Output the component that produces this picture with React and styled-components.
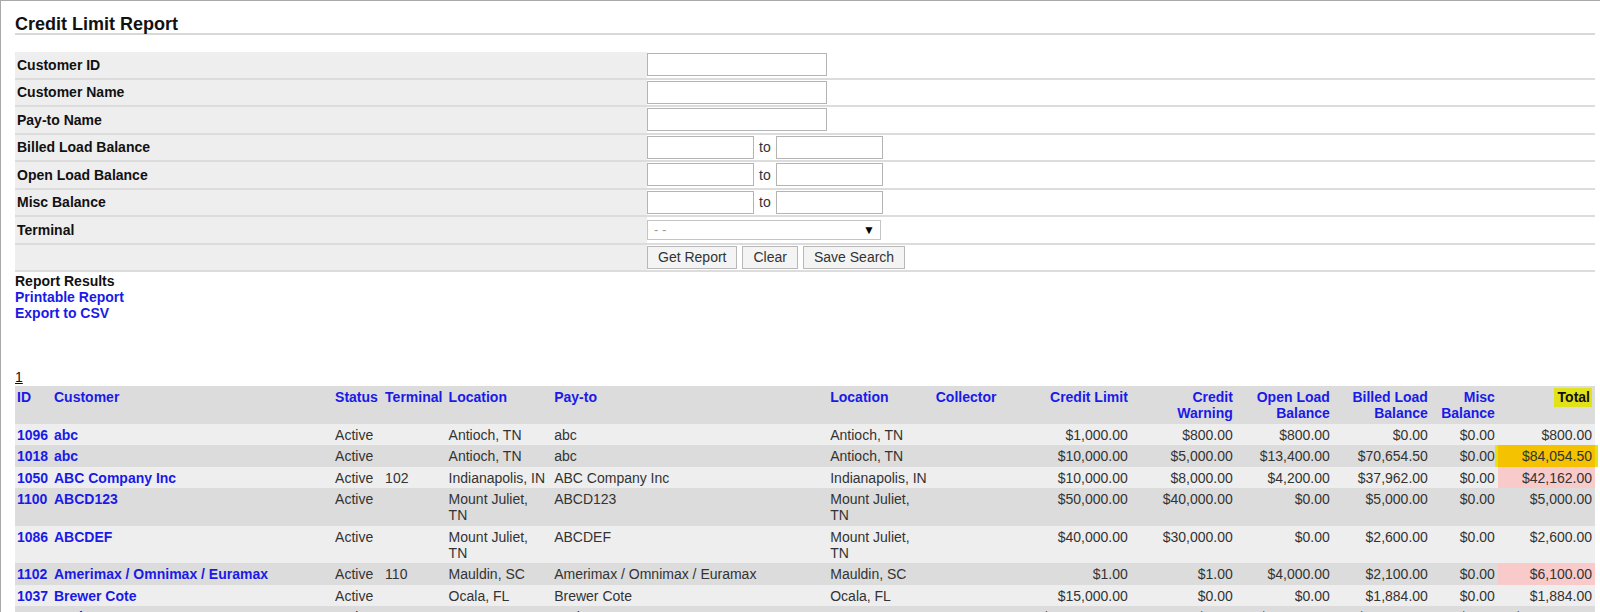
import React from 'react';
import styled, { createGlobalStyle } from 'styled-components';

const GlobalStyle = createGlobalStyle`
  html, body {
    margin: 0;
    padding: 0;
    background: #fff;
    overflow: hidden;
    font-family: "Liberation Sans", Arial, sans-serif;
    font-size: 14px;
    color: #333;
  }
`;

const Page = styled.div`
  border-top: 1px solid #a8a8a8;
  border-left: 1px solid #a8a8a8;
  padding: 15px 5px 0 14px;
  min-height: 700px;
`;

const Title = styled.h1`
  margin: 0;
  font-size: 18px;
  line-height: 17px;
  font-weight: bold;
  color: #111;
  border-bottom: 2px solid #d8d8d8;
`;

const SearchTable = styled.table`
  width: 100%;
  margin-top: 17px;
  border-collapse: collapse;
  table-layout: fixed;
  td {
    padding: 1px 0 1.5px;
    border-bottom: 2px solid #dcdcdc;
    vertical-align: middle;
  }
`;

const LabelCell = styled.td`
  width: 630px;
  padding-left: 2px !important;
  background: #eeeeee;
  font-weight: bold;
  color: #111;
  line-height: 16px;
`;

const FieldCell = styled.td`
  background: #fff;
`;

const Field = styled.div`
  display: flex;
  align-items: center;
  height: 23px;
  gap: 5px;
`;

const TextInput = styled.input`
  box-sizing: border-box;
  width: ${p => p.$w}px;
  height: 23px;
  margin: 0;
  border: 1px solid #b4b4b4;
  background: #fff;
`;

const ToText = styled.span`
  color: #333;
  font-size: 14px;
`;

const SelectBox = styled.div`
  position: relative;
  width: 234px;
  height: 20px;
`;

const Select = styled.select`
  box-sizing: border-box;
  appearance: none;
  width: 100%;
  height: 100%;
  margin: 0;
  padding: 0 6px;
  border: 1px solid #c4c4c4;
  background: #fff;
  color: #999;
  font-family: "Liberation Sans", Arial, sans-serif;
  font-size: 13px;
`;

const Arrow = styled.span`
  position: absolute;
  right: 6px;
  top: 2px;
  font-size: 12px;
  line-height: 16px;
  color: #000;
  pointer-events: none;
`;

const Button = styled.button`
  height: 23px;
  margin: 0;
  padding: 0 10px;
  border: 1px solid #b8b8b8;
  background: #f4f4f4;
  color: #333;
  font-family: "Liberation Sans", Arial, sans-serif;
  font-size: 14px;
`;

const Results = styled.div`
  margin-top: 1px;
  line-height: 16px;
  font-weight: bold;
`;

const ResultsTitle = styled.div`
  color: #111;
`;

const Link = styled.a`
  display: block;
  color: #1a1ae8;
  text-decoration: none;
`;

const Pager = styled.div`
  margin-top: 48px;
  line-height: 16px;
  color: #111;
  > span {
    text-decoration: underline;
  }
`;

const ReportTable = styled.table`
  width: 100%;
  margin-top: 1px;
  border-collapse: collapse;
  table-layout: fixed;
  line-height: 16px;
`;

const Col = styled.col`
  width: ${p => p.$w}px;
`;

const HeadCell = styled.th`
  padding: 3px 3px 2.5px 2px;
  background: #dcdcdc;
  color: #1a1ae8;
  font-weight: bold;
  text-align: ${p => p.$align || 'left'};
  vertical-align: top;
`;

const Marked = styled.span`
  background: #e2e21a;
  padding: 1px 2px 2px 4px;
  color: #111;
`;

const Row = styled.tr`
  background: ${p => (p.$even ? '#dcdcdc' : '#eeeeee')};
`;

const Cell = styled.td`
  padding: 3px 3px 2.5px 2px;
  vertical-align: top;
  text-align: ${p => p.$align || 'left'};
  color: ${p => (p.$link ? '#1a1ae8' : '#333')};
  font-weight: ${p => (p.$link ? 'bold' : 'normal')};
  background: ${p =>
    p.$mark === 'pink' ? '#f9caca' : p.$mark === 'orange' ? '#f4c200' : 'transparent'};
  box-shadow: ${p =>
    p.$mark === 'orange' ? '-3px 0 0 #e2e21a, 3px 0 0 #e2e21a' : 'none'};
`;

const columns = [
  { label: 'ID', w: 37 },
  { label: 'Customer', w: 281 },
  { label: 'Status', w: 50 },
  { label: 'Terminal', w: 63.5 },
  { label: 'Location', w: 105.5 },
  { label: 'Pay-to', w: 276 },
  { label: 'Location', w: 105.5 },
  { label: 'Collector', w: 100 },
  { label: ['Credit Limit'], w: 97, right: true },
  { label: ['Credit', 'Warning'], w: 105, right: true },
  { label: ['Open Load', 'Balance'], w: 97, right: true },
  { label: ['Billed Load', 'Balance'], w: 98, right: true },
  { label: ['Misc', 'Balance'], w: 67, right: true },
  { label: 'Total', w: 97, right: true, marked: true },
];

const rows = [
  ['1096', 'abc', 'Active', '', 'Antioch, TN', 'abc', 'Antioch, TN', '', '$1,000.00', '$800.00', '$800.00', '$0.00', '$0.00', '$800.00'],
  ['1018', 'abc', 'Active', '', 'Antioch, TN', 'abc', 'Antioch, TN', '', '$10,000.00', '$5,000.00', '$13,400.00', '$70,654.50', '$0.00', '$84,054.50', 'orange'],
  ['1050', 'ABC Company Inc', 'Active', '102', 'Indianapolis, IN', 'ABC Company Inc', 'Indianapolis, IN', '', '$10,000.00', '$8,000.00', '$4,200.00', '$37,962.00', '$0.00', '$42,162.00', 'pink'],
  ['1100', 'ABCD123', 'Active', '', 'Mount Juliet, TN', 'ABCD123', 'Mount Juliet, TN', '', '$50,000.00', '$40,000.00', '$0.00', '$5,000.00', '$0.00', '$5,000.00'],
  ['1086', 'ABCDEF', 'Active', '', 'Mount Juliet, TN', 'ABCDEF', 'Mount Juliet, TN', '', '$40,000.00', '$30,000.00', '$0.00', '$2,600.00', '$0.00', '$2,600.00'],
  ['1102', 'Amerimax / Omnimax / Euramax', 'Active', '110', 'Mauldin, SC', 'Amerimax / Omnimax / Euramax', 'Mauldin, SC', '', '$1.00', '$1.00', '$4,000.00', '$2,100.00', '$0.00', '$6,100.00', 'pink'],
  ['1037', 'Brewer Cote', 'Active', '', 'Ocala, FL', 'Brewer Cote', 'Ocala, FL', '', '$15,000.00', '$0.00', '$0.00', '$1,884.00', '$0.00', '$1,884.00'],
  ['1034', 'Lochner', 'Active', 'WASH', 'Fort Wayne, IN', 'Lochner', 'Fort Wayne, IN', '', '$1,111,111.00', '$0.00', '$67,577.41', '$32,850.00', '$0.00', '$100,427.41'],
];

const searchFields = [
  { label: 'Customer ID', kind: 'text' },
  { label: 'Customer Name', kind: 'text' },
  { label: 'Pay-to Name', kind: 'text' },
  { label: 'Billed Load Balance', kind: 'range' },
  { label: 'Open Load Balance', kind: 'range' },
  { label: 'Misc Balance', kind: 'range' },
  { label: 'Terminal', kind: 'select' },
];

const renderField = kind => {
  if (kind === 'range') {
    return (
      <Field>
        <TextInput $w={107} />
        <ToText>to</ToText>
        <TextInput $w={107} />
      </Field>
    );
  }
  if (kind === 'select') {
    return (
      <Field>
        <SelectBox>
          <Select defaultValue="">
            <option value="">- -</option>
          </Select>
          <Arrow>▼</Arrow>
        </SelectBox>
      </Field>
    );
  }
  return (
    <Field>
      <TextInput $w={180} />
    </Field>
  );
};

const HeadLabel = ({ col }) => {
  if (col.marked) return <Marked>{col.label}</Marked>;
  if (Array.isArray(col.label)) {
    return col.label.map((l, i) => (
      <React.Fragment key={i}>
        {i > 0 && <br />}
        {l}
      </React.Fragment>
    ));
  }
  return col.label;
};

const App = () => {
  return (
    <Page>
      <GlobalStyle />
      <Title>Credit Limit Report</Title>

      <SearchTable>
        <tbody>
          {searchFields.map(f => (
            <tr key={f.label}>
              <LabelCell>{f.label}</LabelCell>
              <FieldCell>{renderField(f.kind)}</FieldCell>
            </tr>
          ))}
          <tr>
            <LabelCell />
            <FieldCell>
              <Field>
                <Button>Get Report</Button>
                <Button>Clear</Button>
                <Button>Save Search</Button>
              </Field>
            </FieldCell>
          </tr>
        </tbody>
      </SearchTable>

      <Results>
        <ResultsTitle>Report Results</ResultsTitle>
        <Link href="#">Printable Report</Link>
        <Link href="#">Export to CSV</Link>
      </Results>

      <Pager>
        <span>1</span>
      </Pager>

      <ReportTable>
        <colgroup>
          {columns.map((c, i) => (
            <Col key={i} $w={c.w} />
          ))}
        </colgroup>
        <thead>
          <tr>
            {columns.map((c, i) => (
              <HeadCell key={i} $align={c.right ? 'right' : 'left'}>
                <HeadLabel col={c} />
              </HeadCell>
            ))}
          </tr>
        </thead>
        <tbody>
          {rows.map((r, ri) => (
            <Row key={r[0]} $even={ri % 2 === 1}>
              {columns.map((c, ci) => (
                <Cell
                  key={ci}
                  $align={c.right ? 'right' : 'left'}
                  $link={ci < 2}
                  $mark={ci === 13 ? r[14] : undefined}
                >
                  {r[ci]}
                </Cell>
              ))}
            </Row>
          ))}
        </tbody>
      </ReportTable>
    </Page>
  );
};

export default App;
